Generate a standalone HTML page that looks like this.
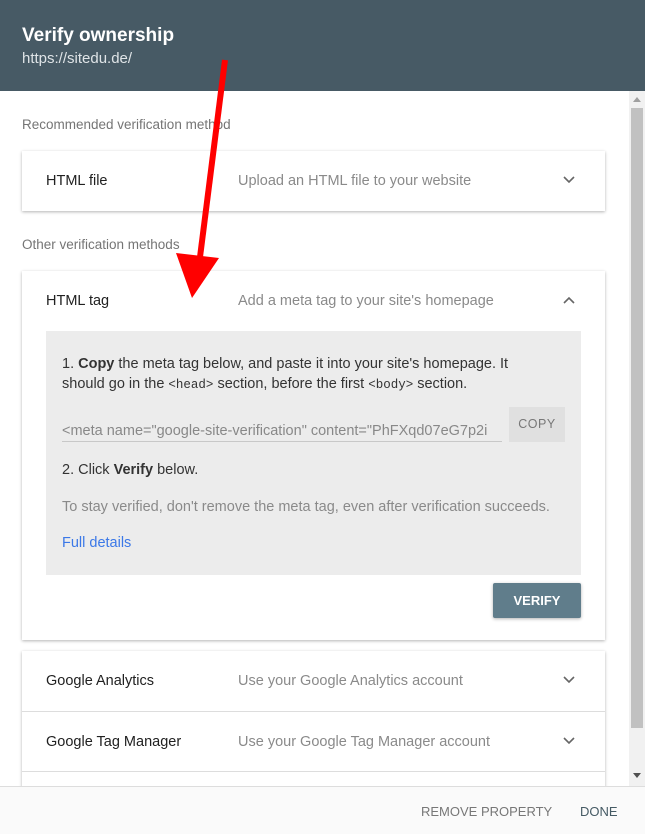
<!DOCTYPE html>
<html><head><style>
*{box-sizing:border-box;margin:0;padding:0}
body{width:645px;height:834px;overflow:hidden;font-family:"Liberation Sans",sans-serif;background:#fff;position:relative}
.hdr{position:absolute;left:0;top:0;width:645px;height:91px;background:#475a65;color:#fff}
.hdr h1{position:absolute;left:22px;top:25px;font-size:19px;font-weight:bold}
.hdr p{position:absolute;left:22px;top:50px;font-size:15px;color:#dfe4e7}
.lbl{position:absolute;left:22px;font-size:13.5px;color:#757575}
.card{position:absolute;left:22px;width:583px;background:#fff;box-shadow:0 1px 3px rgba(0,0,0,.3)}
.row{position:relative;height:60px;font-size:14.5px}
.row .t{position:absolute;left:24px;top:22px;color:#212121}
.row .d{position:absolute;left:216px;top:22px;color:#8a8a8a}
.row svg{position:absolute;left:540px;top:24px}
.sep{border-top:1px solid #ddd}
.gray{position:absolute;left:24px;top:60px;width:535px;height:244px;background:#ececec;font-size:14.5px;color:#333}
.gray .p{position:absolute;left:16px}
code{font-family:"Liberation Mono",monospace;font-size:12.5px}
.foot{position:absolute;left:0;top:786px;width:645px;height:48px;background:#fafafa;border-top:1px solid #ddd;font-size:13px}
.sb{position:absolute;left:629px;top:91px;width:16px;height:695px;background:#f1f1f1}
.thumb{position:absolute;left:2px;top:17px;width:12px;height:620px;background:#c1c1c1}
</style></head><body>
<div class="hdr"><h1>Verify ownership</h1><p>https://sitedu.de/</p></div>
<div class="lbl" style="top:117px">Recommended verification method</div>
<div class="card" style="top:151px;height:60px"><div class="row"><span class="t">HTML file</span><span class="d">Upload an HTML file to your website</span><svg width="14" height="10"><path d="M2 2l5 5 5-5" stroke="#666" stroke-width="1.6" fill="none"/></svg></div></div>
<div class="lbl" style="top:237px">Other verification methods</div>
<div class="card" style="top:271px;height:369px">
<div class="row"><span class="t">HTML tag</span><span class="d">Add a meta tag to your site's homepage</span><svg width="14" height="10"><path d="M2 8l5-5 5 5" stroke="#666" stroke-width="1.6" fill="none"/></svg></div>
<div class="gray">
<div class="p" style="top:23px;line-height:20px;width:480px">1. <b>Copy</b> the meta tag below, and paste it into your site's homepage. It should go in the <code>&lt;head&gt;</code> section, before the first <code>&lt;body&gt;</code> section.</div>
<div class="p" style="top:92px;width:440px;height:19px;overflow:hidden;white-space:nowrap;color:#888;border-bottom:1px solid #c8c8c8">&lt;meta name="google-site-verification" content="PhFXqd07eG7p2i</div>
<div style="position:absolute;left:463px;top:76px;width:56px;height:35px;background:#e0e0e0;color:#777;font-size:12.5px;text-align:center;line-height:35px;letter-spacing:.5px">COPY</div>
<div class="p" style="top:131px">2. Click <b>Verify</b> below.</div>
<div class="p" style="top:168px;color:#8a8a8a">To stay verified, don't remove the meta tag, even after verification succeeds.</div>
<div class="p" style="top:204px;color:#3b78e7">Full details</div>
</div>
<div style="position:absolute;left:471px;top:312px;width:88px;height:35px;background:#607d8b;color:#fff;font-weight:bold;font-size:13px;text-align:center;line-height:35px;border-radius:2px;box-shadow:0 1px 3px rgba(0,0,0,.3)">VERIFY</div>
</div>
<div class="card" style="top:651px;height:140px">
<div class="row"><span class="t">Google Analytics</span><span class="d">Use your Google Analytics account</span><svg width="14" height="10"><path d="M2 2l5 5 5-5" stroke="#666" stroke-width="1.6" fill="none"/></svg></div>
<div class="row sep"><span class="t">Google Tag Manager</span><span class="d">Use your Google Tag Manager account</span><svg width="14" height="10"><path d="M2 2l5 5 5-5" stroke="#666" stroke-width="1.6" fill="none"/></svg></div>
<div class="row sep"></div>
</div>
<div class="sb"><div class="thumb"></div><svg style="position:absolute;left:4px;top:6px" width="8" height="6"><path d="M0 5h8L4 0z" fill="#a0a0a0"/></svg><svg style="position:absolute;left:4px;top:682px" width="8" height="6"><path d="M0 0h8L4 5z" fill="#505050"/></svg></div>
<div class="foot"><span style="position:absolute;left:421px;top:17px;color:#777">REMOVE PROPERTY</span><span style="position:absolute;left:580px;top:17px;color:#455a64">DONE</span></div>
<svg style="position:absolute;left:0;top:0" width="645" height="834"><line x1="225" y1="60" x2="199" y2="265" stroke="#f00" stroke-width="6"/><polygon points="176,253 219,258 192,298" fill="#f00"/></svg>
</body></html>
